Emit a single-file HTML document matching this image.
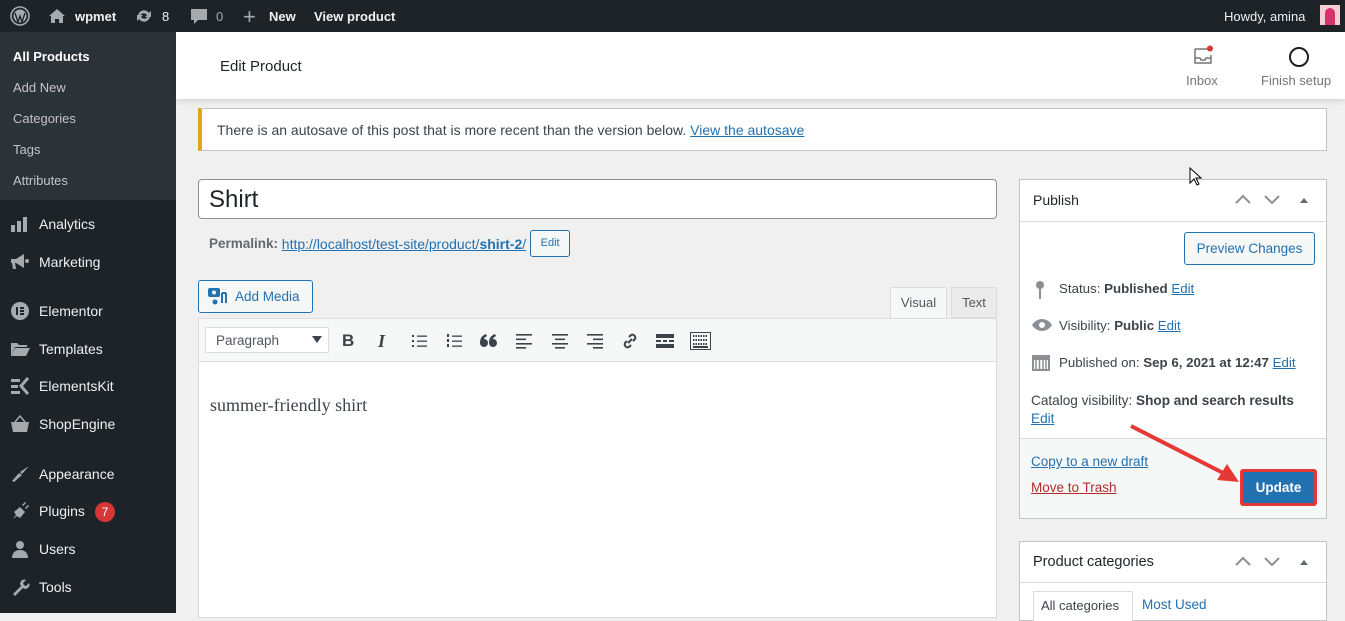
<!DOCTYPE html>
<html><head><meta charset="utf-8"><style>
*{box-sizing:border-box;margin:0;padding:0}
body{width:1345px;height:613px;overflow:hidden;background:#f0f0f1;font-family:"Liberation Sans",sans-serif;font-size:13px;color:#1d2327;position:relative}
.abs{position:absolute}
#top{left:0;top:0;width:1345px;height:32px;background:#1d2327;color:#f0f0f1;font-size:13px}
#top span{position:absolute;top:9px}
#side{left:0;top:32px;width:176px;height:581px;background:#1d2327}
#sub{left:0;top:32px;width:176px;height:168px;background:#2c3338}
.sl{position:absolute;left:13px;color:#c3c4c7;font-size:13px}
.ml{position:absolute;left:39px;color:#f0f0f1;font-size:14px}
.ic{position:absolute;left:10px;width:20px;height:20px;color:#a7aaad}
#hdr{left:176px;top:32px;width:1169px;height:67px;background:#fff;box-shadow:0 2px 6px rgba(0,0,0,.12)}
a,.lnk{color:#2271b1;text-decoration:underline}
.box{background:#fff;border:1px solid #c3c4c7}
.tb{position:absolute;top:331px;color:#3c434a;font-size:16px}
</style></head><body>
<div id="top" class="abs">
<svg class="abs" style="left:10px;top:6px" width="20" height="20" viewBox="0 0 20 20"><circle cx="10" cy="10" r="9" fill="none" stroke="#a7aaad" stroke-width="1.6"/><circle cx="10" cy="10" r="6.5" fill="#a7aaad"/><path d="M5 7l3 9 2-6 2 6 3-9" stroke="#1d2327" stroke-width="1.3" fill="none"/></svg>
<svg class="abs" style="left:48px;top:8px" width="18" height="16" viewBox="0 0 18 16"><path d="M9 1L1 8h2v7h4v-4h4v4h4V8h2z" fill="#a7aaad"/></svg>
<span style="left:75px;font-weight:bold">wpmet</span>
<svg class="abs" style="left:135px;top:8px" width="18" height="16" viewBox="0 0 18 16"><path d="M3 8a6 6 0 0111-3l2-2v6h-6l2-2a4 4 0 00-7 1zM15 8a6 6 0 01-11 3l-2 2V7h6l-2 2a4 4 0 007-1z" fill="#a7aaad"/></svg>
<span style="left:162px">8</span>
<svg class="abs" style="left:190px;top:8px" width="18" height="17" viewBox="0 0 18 17"><path d="M1 1h16v11H8l-4 4v-4H1z" fill="#a7aaad"/></svg>
<span style="left:216px;color:#a7aaad">0</span>
<span style="left:243px;top:4px;font-size:22px;color:#a7aaad">+</span>
<span style="left:269px;font-weight:bold">New</span>
<span style="left:314px;font-weight:bold">View product</span>
<span style="left:1224px">Howdy, amina</span>
<div class="abs" style="left:1320px;top:5px;width:20px;height:20px;background:#f4d0d4"><div style="margin:3px 0 0 5px;width:10px;height:17px;background:#d8336d;border-radius:5px 5px 0 0"></div></div>
</div>
<div id="side" class="abs"></div>
<div id="sub" class="abs"></div>
<div class="sl" style="top:49px;color:#fff;font-weight:bold">All Products</div>
<div class="sl" style="top:80px">Add New</div>
<div class="sl" style="top:111px">Categories</div>
<div class="sl" style="top:142px">Tags</div>
<div class="sl" style="top:173px">Attributes</div>
<svg class="ic" style="top:215px" viewBox="0 0 20 20"><rect x="1" y="10" width="4" height="7" fill="#a7aaad"/><rect x="7" y="6" width="4" height="11" fill="#a7aaad"/><rect x="13" y="2" width="4" height="15" fill="#a7aaad"/></svg>
<div class="ml" style="top:216px">Analytics</div>
<svg class="ic" style="top:252px" viewBox="0 0 20 20"><path d="M1 7h5l8-5v14l-8-5H5l1 6H3L2 11H1z" fill="#a7aaad"/><circle cx="17" cy="9" r="2" fill="#a7aaad"/></svg>
<div class="ml" style="top:254px">Marketing</div>
<svg class="ic" style="top:301px" viewBox="0 0 20 20"><circle cx="10" cy="10" r="9" fill="#a7aaad"/><rect x="6" y="6" width="2" height="8" fill="#1d2327"/><rect x="10" y="6" width="4" height="2" fill="#1d2327"/><rect x="10" y="9" width="4" height="2" fill="#1d2327"/><rect x="10" y="12" width="4" height="2" fill="#1d2327"/></svg>
<div class="ml" style="top:303px">Elementor</div>
<svg class="ic" style="top:339px" viewBox="0 0 20 20"><path d="M1 4h6l2 2h8v2H5l-4 9z M5 9h15l-4 8H1z" fill="#a7aaad"/></svg>
<div class="ml" style="top:341px">Templates</div>
<svg class="ic" style="top:376px" viewBox="0 0 20 20"><rect x="1" y="3" width="9" height="3" fill="#a7aaad"/><rect x="1" y="9" width="7" height="3" fill="#a7aaad"/><rect x="1" y="15" width="9" height="3" fill="#a7aaad"/><path d="M18 2l-7 8 7 8" stroke="#a7aaad" stroke-width="3" fill="none"/></svg>
<div class="ml" style="top:378px">ElementsKit</div>
<svg class="ic" style="top:414px" viewBox="0 0 20 20"><path d="M1 8h18l-2 10H3z" fill="#a7aaad"/><path d="M5 8l5-6 5 6" stroke="#a7aaad" stroke-width="1.5" fill="none"/></svg>
<div class="ml" style="top:416px">ShopEngine</div>
<svg class="ic" style="top:464px" viewBox="0 0 20 20"><path d="M19 2l-9 6 2 2zM9 9l-7 8 2 1 8-7z" fill="#a7aaad"/></svg>
<div class="ml" style="top:466px">Appearance</div>
<svg class="ic" style="top:501px" viewBox="0 0 20 20"><path d="M3 18l3-4-2-3 6-5 5 5-5 6-3-2-4 3zM12 4l3-3 1 1-3 3zM15 7l3-3 1 1-3 3z" fill="#a7aaad"/></svg>
<div class="ml" style="top:503px">Plugins</div>
<div class="abs" style="left:95px;top:502px;width:20px;height:20px;border-radius:10px;background:#d63638;color:#fff;font-size:12px;text-align:center;line-height:20px">7</div>
<svg class="ic" style="top:539px" viewBox="0 0 20 20"><circle cx="10" cy="6" r="4" fill="#a7aaad"/><path d="M2 19c0-6 4-8 8-8s8 2 8 8z" fill="#a7aaad"/></svg>
<div class="ml" style="top:541px">Users</div>
<svg class="ic" style="top:577px" viewBox="0 0 20 20"><path d="M3 17l8-8a4 4 0 015-6l-3 3 1 2 2 1 3-3a4 4 0 01-6 5l-8 8z" fill="#a7aaad"/></svg>
<div class="ml" style="top:579px">Tools</div>

<div id="hdr" class="abs"><div class="abs" style="left:44px;top:26px;font-size:15px;color:#1d2327">Edit Product</div>
<svg class="abs" style="left:1017px;top:13px" width="22" height="22" viewBox="0 0 22 22"><path d="M2 4h14M2 4v14h16V10M2 13h5l1 2h4l1-2h5" stroke="#757575" stroke-width="1.5" fill="none"/><circle cx="17" cy="3.5" r="3" fill="#d63638"/></svg>
<div class="abs" style="left:1010px;top:41px;color:#757575">Inbox</div>
<svg class="abs" style="left:1112px;top:14px" width="22" height="22"><circle cx="11" cy="11" r="9" stroke="#1e1e1e" stroke-width="2" fill="none"/></svg>
<div class="abs" style="left:1085px;top:41px;color:#757575">Finish setup</div>
</div>

<div class="abs box" style="left:198px;top:108px;width:1129px;height:43px;border-left:4px solid #dba617;padding:13px 0 0 15px;font-size:14px;color:#3c434a">There is an autosave of this post that is more recent than the version below. <span class="lnk">View the autosave</span></div>

<div class="abs" style="left:198px;top:179px;width:799px;height:40px;background:#fff;border:1px solid #8c8f94;border-radius:4px;font-size:24px;padding:6px 10px;color:#1d2327">Shirt</div>
<div class="abs" style="left:209px;top:230px;height:27px;display:flex;align-items:center;font-size:13.5px;white-space:nowrap"><b style="color:#646970">Permalink:</b>&nbsp;<span class="lnk" style="font-size:14px">http://localhost/test-site/product/<b>shirt-2</b>/</span><span style="margin-left:4px;width:40px;height:27px;border:1px solid #2271b1;border-radius:3px;background:#f6f7f7;color:#2271b1;font-size:11px;text-align:center;line-height:25px">Edit</span></div>

<div class="abs" style="left:198px;top:280px;width:115px;height:33px;border:1px solid #2271b1;border-radius:3px;background:#f6f7f7;color:#2271b1;font-size:13.5px;padding:8px 0 0 36px">Add Media</div>
<svg class="abs" style="left:208px;top:287px" width="20" height="18" viewBox="0 0 20 18"><rect x="0" y="1" width="12" height="9" rx="2" fill="#2271b1"/><circle cx="6" cy="5.5" r="2" fill="#f6f7f7"/><path d="M14 6v10M18 6v10M14 6h4" stroke="#2271b1" stroke-width="2"/><circle cx="7" cy="15" r="2.5" fill="#2271b1"/></svg>
<div class="abs" style="left:890px;top:287px;width:57px;height:32px;background:#f6f7f7;border:1px solid #dcdcde;border-bottom:none;color:#50575e;text-align:center;line-height:30px">Visual</div>
<div class="abs" style="left:951px;top:287px;width:46px;height:31px;background:#ebebeb;border:1px solid #dcdcde;color:#50575e;text-align:center;line-height:30px">Text</div>
<div class="abs" style="left:198px;top:318px;width:799px;height:300px;background:#fff;border:1px solid #dcdcde"></div>
<div class="abs" style="left:199px;top:319px;width:797px;height:43px;background:#f6f7f7;border-bottom:1px solid #dcdcde"></div>
<div class="abs" style="left:205px;top:327px;width:124px;height:26px;background:#fff;border:1px solid #dcdcde;color:#50575e;padding:5px 10px;font-size:13.5px">Paragraph</div>
<svg class="abs" style="left:312px;top:336px" width="10" height="7"><path d="M0 0h10L5 7z" fill="#3c434a"/></svg>
<div class="tb" style="left:342px;font-weight:bold;font-size:17px">B</div>
<div class="tb" style="left:378px;font-style:italic;font-family:'Liberation Serif',serif;font-weight:bold;font-size:18px">I</div>
<svg class="abs" style="left:411px;top:332px" width="18" height="18" viewBox="0 0 18 18" fill="#3c434a"><rect x="1" y="3" width="2" height="2"/><rect x="1" y="8" width="2" height="2"/><rect x="1" y="13" width="2" height="2"/><rect x="6" y="3.5" width="10" height="1.3"/><rect x="6" y="8.5" width="10" height="1.3"/><rect x="6" y="13.5" width="10" height="1.3"/></svg>
<svg class="abs" style="left:446px;top:332px" width="18" height="18" viewBox="0 0 18 18" fill="#3c434a"><rect x="1" y="2" width="2" height="3"/><rect x="1" y="7" width="2" height="3"/><rect x="1" y="12" width="2" height="3"/><rect x="6" y="3.5" width="10" height="1.3"/><rect x="6" y="8.5" width="10" height="1.3"/><rect x="6" y="13.5" width="10" height="1.3"/></svg>
<svg class="abs" style="left:480px;top:334px" width="18" height="14" viewBox="0 0 18 14" fill="#3c434a"><circle cx="4" cy="9" r="4"/><path d="M0 9Q0 2 6 0l1 2Q3 4 3 8z"/><circle cx="13" cy="9" r="4"/><path d="M9 9Q9 2 15 0l1 2Q12 4 12 8z"/></svg>
<svg class="abs" style="left:515px;top:332px" width="18" height="18" fill="#3c434a"><rect x="1" y="2" width="16" height="1.6"/><rect x="1" y="6.5" width="10" height="1.6"/><rect x="1" y="11" width="16" height="1.6"/><rect x="1" y="15" width="10" height="1.6"/></svg>
<svg class="abs" style="left:551px;top:332px" width="18" height="18" fill="#3c434a"><rect x="1" y="2" width="16" height="1.6"/><rect x="4" y="6.5" width="10" height="1.6"/><rect x="1" y="11" width="16" height="1.6"/><rect x="4" y="15" width="10" height="1.6"/></svg>
<svg class="abs" style="left:586px;top:332px" width="18" height="18" fill="#3c434a"><rect x="1" y="2" width="16" height="1.6"/><rect x="7" y="6.5" width="10" height="1.6"/><rect x="1" y="11" width="16" height="1.6"/><rect x="7" y="15" width="10" height="1.6"/></svg>
<svg class="abs" style="left:620px;top:331px" width="20" height="20" viewBox="0 0 20 20"><path d="M8 12l4-4M9 6l2-2a3 3 0 014 4l-2 2M11 14l-2 2a3 3 0 01-4-4l2-2" stroke="#3c434a" stroke-width="2" fill="none"/></svg>
<svg class="abs" style="left:656px;top:332px" width="18" height="18" fill="#3c434a"><rect x="0" y="2" width="18" height="4"/><rect x="0" y="8" width="5" height="2"/><rect x="7" y="8" width="4" height="2"/><rect x="13" y="8" width="5" height="2"/><rect x="0" y="12" width="18" height="4"/></svg>
<svg class="abs" style="left:690px;top:331px" width="21" height="20" viewBox="0 0 21 20"><rect x="0.5" y="1.5" width="20" height="17" fill="none" stroke="#3c434a"/><path d="M3 5h15M3 9h15M3 13h15" stroke="#3c434a" stroke-width="2" stroke-dasharray="1.5 1"/><rect x="3" y="15" width="15" height="2" fill="#3c434a"/></svg>
<div class="abs" style="left:210px;top:395px;font-family:'Liberation Serif',serif;font-size:18px;color:#3c434a">summer-friendly shirt</div>

<div class="abs box" style="left:1019px;top:179px;width:308px;height:340px"></div>
<div class="abs" style="left:1020px;top:221px;width:306px;height:1px;background:#dcdcde"></div>
<div class="abs" style="left:1033px;top:192px;font-size:14px">Publish</div>
<svg class="abs" style="left:1233px;top:192px" width="80" height="16"><path d="M3 11l7-7 7 7M32 4l7 7 7-7" stroke="#8c8f94" stroke-width="2" fill="none"/><path d="M67 11l4-5 4 5z" fill="#646970"/></svg>
<div class="abs" style="left:1184px;top:232px;width:131px;height:33px;border:1px solid #2271b1;border-radius:3px;background:#f6f7f7;color:#2271b1;text-align:center;line-height:31px;font-size:13.5px">Preview Changes</div>
<svg class="abs" style="left:1033px;top:280px" width="14" height="20"><circle cx="7" cy="5" r="4" fill="#8c8f94"/><rect x="6" y="8" width="2" height="11" fill="#8c8f94"/></svg>
<div class="abs" style="left:1059px;top:281px;color:#3c434a;font-size:13.3px">Status: <b>Published</b> <span class="lnk">Edit</span></div>
<svg class="abs" style="left:1031px;top:318px" width="22" height="14"><path d="M1 7c5-8 15-8 20 0-5 8-15 8-20 0z" fill="#8c8f94"/><circle cx="11" cy="7" r="3" fill="#fff"/></svg>
<div class="abs" style="left:1059px;top:318px;color:#3c434a;font-size:13.3px">Visibility: <b>Public</b> <span class="lnk">Edit</span></div>
<svg class="abs" style="left:1031px;top:352px" width="20" height="20"><rect x="1" y="3" width="18" height="16" fill="#8c8f94"/><rect x="3" y="8" width="14" height="9" fill="#fff"/><path d="M5 8v9M8.5 8v9M12 8v9M15 8v9" stroke="#8c8f94" stroke-width="1.5"/></svg>
<div class="abs" style="left:1059px;top:355px;color:#3c434a;font-size:13.3px">Published on: <b>Sep 6, 2021 at 12:47</b> <span class="lnk">Edit</span></div>
<div class="abs" style="left:1031px;top:393px;color:#3c434a;font-size:13.6px;white-space:nowrap">Catalog visibility: <b>Shop and search results</b><br><span class="lnk" style="line-height:21px">Edit</span></div>
<div class="abs" style="left:1020px;top:438px;width:306px;height:80px;background:#f6f7f7;border-top:1px solid #dcdcde"></div>
<div class="abs lnk" style="left:1031px;top:454px;font-size:13.5px">Copy to a new draft</div>
<div class="abs" style="left:1031px;top:480px;color:#b32d2e;text-decoration:underline;font-size:13.5px">Move to Trash</div>
<div class="abs" style="left:1240px;top:469px;width:77px;height:37px;border:3px solid #e53935;border-radius:3px;background:#2271b1;color:#fff;text-align:center;line-height:31px;font-weight:bold;font-size:13.5px">Update</div>
<svg class="abs" style="left:1125px;top:420px" width="120" height="70"><path d="M6 6L108 58" stroke="#e53935" stroke-width="4"/><path d="M114 62L92 60l10-16z" fill="#e53935"/></svg>
<svg class="abs" style="left:1189px;top:167px" width="14" height="20"><path d="M1 1v15l4-4 3 6 2-1-3-6h5z" fill="#fff" stroke="#000"/></svg>

<div class="abs box" style="left:1019px;top:541px;width:308px;height:80px"></div>
<div class="abs" style="left:1020px;top:582px;width:306px;height:1px;background:#dcdcde"></div>
<div class="abs" style="left:1033px;top:554px;font-size:14.5px">Product categories</div>
<svg class="abs" style="left:1233px;top:554px" width="80" height="16"><path d="M3 11l7-7 7 7M32 4l7 7 7-7" stroke="#8c8f94" stroke-width="2" fill="none"/><path d="M67 11l4-5 4 5z" fill="#646970"/></svg>
<div class="abs" style="left:1033px;top:591px;width:100px;height:30px;border:1px solid #dcdcde;border-bottom:none;background:#fff;padding:6px 0 0 7px;color:#3c434a">All categories</div>
<div class="abs" style="left:1142px;top:597px;color:#2271b1;font-size:13.5px">Most Used</div>
</body></html>
